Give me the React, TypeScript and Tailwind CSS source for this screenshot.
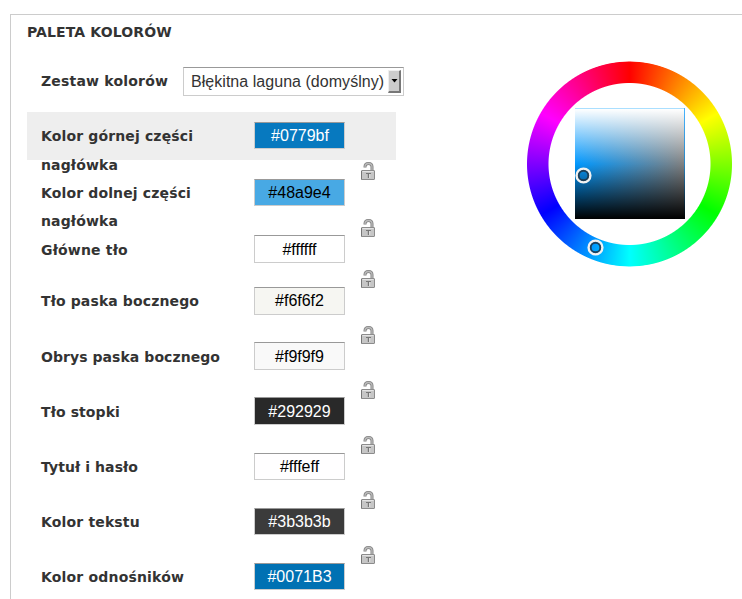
const fields = [
  { label: 'Kolor górnej części nagłówka', value: '#0779bf', row: 'h-[57px]', text: 'leading-[29px] pt-[10px] tracking-[0.14px]', lock: '', box: 'h-[27px] bg-[#0779bf] text-white pl-px' },
  { label: 'Kolor dolnej części nagłówka', value: '#48a9e4', row: 'h-[56px]', text: 'leading-[28px] pt-[10px] tracking-[0.14px]', lock: '-mt-[7px]', box: 'h-[27px] bg-[#48a9e4] text-black' },
  { label: 'Główne tło', value: '#ffffff', row: 'h-[52px]', text: 'leading-[28px] pt-[11px] tracking-[0.18px]', lock: '-mt-[6px]', box: 'h-[28px] bg-[#ffffff] text-black pt-[2px]' },
  { label: 'Tło paska bocznego', value: '#f6f6f2', row: 'h-[55px]', text: 'leading-[28px] pt-[10px] tracking-[0.12px]', lock: '-mt-[7px]', box: 'h-[28px] bg-[#f6f6f2] text-black' },
  { label: 'Obrys paska bocznego', value: '#f9f9f9', row: 'h-[55px]', text: 'leading-[28px] pt-[11px] tracking-[0.06px]', lock: '-mt-[6px]', box: 'h-[28px] bg-[#f9f9f9] text-black pt-[2px]' },
  { label: 'Tło stopki', value: '#292929', row: 'h-[56px]', text: 'leading-[28px] pt-[11px] tracking-[0.1px]', lock: '-mt-[6px]', box: 'h-[28px] bg-[#292929] text-white pt-[2px]' },
  { label: 'Tytuł i hasło', value: '#fffeff', row: 'h-[55px]', text: 'leading-[28px] pt-[10px] tracking-[0.08px]', lock: '-mt-[7px]', box: 'h-[27px] bg-[#fffeff] text-black' },
  { label: 'Kolor tekstu', value: '#3b3b3b', row: 'h-[55px]', text: 'leading-[28px] pt-[10px] tracking-[0.16px]', lock: '-mt-[7px]', box: 'h-[27px] bg-[#3b3b3b] text-white' },
  { label: 'Kolor odnośników', value: '#0071B3', row: 'h-[36px]', text: 'leading-[28px] pt-[10px] tracking-[0.18px]', lock: '-mt-[7px]', box: 'h-[27px] bg-[#0071B3] text-white' },
];

function Lock() {
  return (
    <svg width="14" height="18" viewBox="0 0 14 18" className="block">
      <path d="M4 5.5V4.8Q4 1.5 7.5 1.5T11 4.8V9" fill="none" stroke="#828282" strokeWidth="3" />
      <path d="M4 5V4.8Q4 1.5 7.5 1.5T11 4.8V9" fill="none" stroke="#bababa" strokeWidth="1.3" />
      <rect x="0.5" y="8.5" width="13" height="9" rx="0.5" fill="#c6c6c6" stroke="#8c8c8c" />
      <path d="M1.5 9.5h11" stroke="#e4e4e4" />
      <path d="M.5 9v8.5" stroke="#777" />
      <path d="M5 11.5h5" stroke="#777" />
      <path d="M7.5 11v5" stroke="#777" strokeWidth="1.4" />
      <path d="M8.7 12v4" stroke="#e5e5e5" />
    </svg>
  );
}

function Marker({ place }: { place: string }) {
  return (
    <svg width="17" height="17" viewBox="0 0 17 17" className={`absolute ${place}`}>
      <circle cx="8.5" cy="8.5" r="6.8" fill="none" stroke="#f2f2f2" strokeWidth="2.6" />
      <circle cx="8.5" cy="8.5" r="4.8" fill="none" stroke="#203444" strokeOpacity="0.85" strokeWidth="1.9" />
    </svg>
  );
}

export default function App() {
  return (
    <div className="h-[599px] w-[742px] overflow-hidden bg-white pt-[14px] pl-[10px] font-['DejaVu_Sans',sans-serif] text-[14px] text-[#333]">
      <div className="flex h-[600px] border-t border-l border-[#ccc] pl-4">
        <section className="w-[377px] shrink-0">
          <h2 className="h-[52px] pt-[7px] font-bold leading-[20px] tracking-[0.12px]">PALETA KOLORÓW</h2>
          <div className="flex h-[45px] pl-[14px]">
            <label className="w-[142px] pt-[4px] font-bold leading-[20px] tracking-[0.2px]">Zestaw kolorów</label>
            <div className="flex h-[29px] w-[221px] shrink-0 items-center justify-between border border-[#ccc] border-t-[#999] pr-[2px] pl-[7px] font-['Liberation_Sans',sans-serif] text-[16px]">
              <span className="whitespace-nowrap tracking-[0.04px]">Błękitna laguna (domyślny)</span>
              <span className="flex h-[23px] w-[13px] items-center justify-center border border-t-[#eee] border-l-[#eee] border-r-2 border-b-2 border-r-[#777] border-b-[#777] bg-[#ccc]">
                <svg width="7" height="4"><path d="M0.5 0h6L3.5 3.5z" fill="#000" /></svg>
              </span>
            </div>
          </div>
          {fields.map((f, i) => (
            <div key={f.label} className={`w-[369px] ${f.row}`}>
              <div className={`flex h-[48px] pl-[14px] ${i === 0 ? 'bg-[#eee]' : ''}`}>
                <label className={`w-[213px] shrink-0 pr-[30px] font-bold ${f.text}`}>{f.label}</label>
                <div className={`mt-[10px] flex w-[91px] shrink-0 items-center justify-center border border-[#ccc] border-t-[#999] font-['Liberation_Sans',sans-serif] text-[16px] ${f.box}`}>{f.value}</div>
                {i > 0 && <div className={`ml-4 ${f.lock}`}><Lock /></div>}
              </div>
            </div>
          ))}
        </section>
        <div className="relative mt-[46px] ml-[122px] h-[206px] w-[207px] shrink-0">
          <div className="size-full rounded-full bg-[conic-gradient(#f00,#ff0,#0f0,#0ff,#00f,#f0f,#f00)] [mask-image:radial-gradient(circle,transparent_80.5px,#000_81.5px,#000_102px,transparent_103px)]" />
          <div className="absolute top-[47px] left-[49px] h-[111px] w-[110px] bg-[linear-gradient(#aadfff,#aadfff_1px,#0098ff_1px)] pt-px pr-px">
            <div className="size-full bg-[linear-gradient(#fff,#fff0_50%,#0000_50%,#000),linear-gradient(90deg,#80808000,#808080)]" />
            <div className="absolute inset-y-0 right-0 w-px bg-[linear-gradient(#48b4ff,#2a86c4_50%,#000)]" />
          </div>
          <Marker place="top-[106px] left-[49px]" />
          <Marker place="top-[178px] left-[61px]" />
        </div>
      </div>
    </div>
  );
}
